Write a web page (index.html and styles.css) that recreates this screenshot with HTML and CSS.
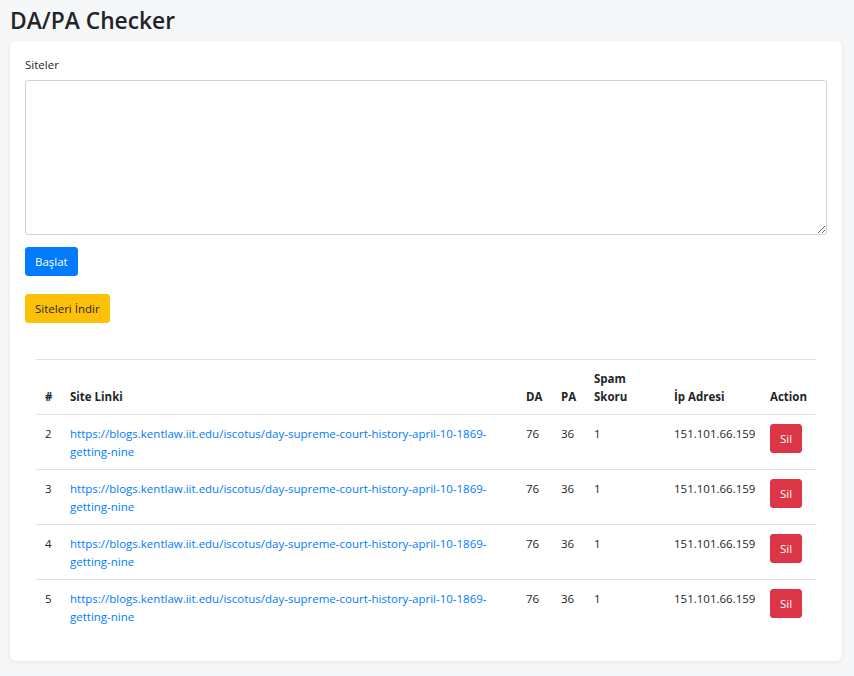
FILE: index.html
```html
<!DOCTYPE html>
<html lang="tr">
<head>
<meta charset="utf-8">
<title>DA/PA Checker</title>
<link rel="stylesheet" href="styles.css">
</head>
<body>
<h1 class="title">DA/PA Checker</h1>
<div class="card">
  <div class="form-group">
    <label class="label" for="sites">Siteler</label>
    <textarea id="sites" class="textarea"></textarea>
  </div>
  <button class="btn btn-primary">Başlat</button>
  <div class="download-row">
    <button class="btn btn-warning">Siteleri İndir</button>
  </div>
  <div class="table-wrap">
    <table class="table">
      <colgroup>
        <col class="c-num"><col class="c-link"><col class="c-da"><col class="c-pa"><col class="c-spam"><col class="c-ip"><col class="c-act">
      </colgroup>
      <thead>
        <tr><th>#</th><th>Site Linki</th><th>DA</th><th>PA</th><th>Spam Skoru</th><th>İp Adresi</th><th>Action</th></tr>
      </thead>
      <tbody>
        <tr><td>2</td><td><a href="#">https://blogs.kentlaw.iit.edu/iscotus/day-supreme-court-history-april-10-1869-getting-nine</a></td><td>76</td><td>36</td><td>1</td><td>151.101.66.159</td><td><button class="btn btn-danger">Sil</button></td></tr>
        <tr><td>3</td><td><a href="#">https://blogs.kentlaw.iit.edu/iscotus/day-supreme-court-history-april-10-1869-getting-nine</a></td><td>76</td><td>36</td><td>1</td><td>151.101.66.159</td><td><button class="btn btn-danger">Sil</button></td></tr>
        <tr><td>4</td><td><a href="#">https://blogs.kentlaw.iit.edu/iscotus/day-supreme-court-history-april-10-1869-getting-nine</a></td><td>76</td><td>36</td><td>1</td><td>151.101.66.159</td><td><button class="btn btn-danger">Sil</button></td></tr>
        <tr><td>5</td><td><a href="#">https://blogs.kentlaw.iit.edu/iscotus/day-supreme-court-history-april-10-1869-getting-nine</a></td><td>76</td><td>36</td><td>1</td><td>151.101.66.159</td><td><button class="btn btn-danger">Sil</button></td></tr>
      </tbody>
    </table>
  </div>
</div>
</body>
</html>
```
FILE: styles.css
```css
html { font-size: 12px; }
body {
  margin: 0;
  padding: 0 12px 15px 10px;
  background: #f6f7f9;
  font-family: "Open Sans", "Noto Sans", sans-serif;
  font-size: 11.5px;
  line-height: 18px;
  color: #212529;
}
.title {
  margin: 7px 0 6px;
  font-size: 22.8px;
  line-height: 28px;
  font-weight: 600;
  color: #212529;
}
.card {
  background: #fff;
  border-radius: 6px;
  box-shadow: 0 1px 4px rgba(0,0,0,0.08);
  padding: 15px 15px 27px;
}
.form-group { margin-bottom: 12px; }
.label {
  display: block;
  margin-bottom: 6px;
  font-size: 11.5px;
}
.textarea {
  display: block;
  box-sizing: border-box;
  width: 100%;
  height: 155px;
  border: 1px solid #ced4da;
  border-radius: 3px;
  padding: 4px 9px;
  margin: 0;
  font: inherit;
}
.btn {
  display: inline-block;
  border: 1px solid transparent;
  border-radius: 3px;
  padding: 5px 9px;
  font-family: inherit;
  font-size: 11.5px;
  line-height: 17px;
  cursor: pointer;
}
.btn-primary { background: #007bff; border-color: #007bff; color: #fff; }
.btn-warning { background: #ffc107; border-color: #ffc107; color: #212529; }
.btn-danger { background: #dc3545; border-color: #dc3545; color: #fff; }
.download-row { margin-top: 18px; }
.table-wrap { margin: 36px 11px 0; }
.table {
  width: 100%;
  border-collapse: collapse;
  table-layout: fixed;
}
.c-num { width: 25px; }
.c-da { width: 35px; }
.c-pa { width: 33px; }
.c-spam { width: 80px; }
.c-ip { width: 96px; }
.c-act { width: 55px; }
.table th, .table td {
  padding: 9px;
  text-align: left;
  border-top: 1px solid #dee2e6;
  vertical-align: top;
}
.table th {
  vertical-align: bottom;
  font-weight: 700;
  border-bottom: 1px solid #dee2e6;
  padding-top: 10px;
  padding-bottom: 8px;
}
.table td { padding-top: 10px; padding-bottom: 8px; }
.table thead th:first-child, .table td:first-child { padding-right: 0; }
.table a { color: #007bff; text-decoration: none; }
.table tbody tr:first-child td { border-top: 0; }
.table td .btn-danger { margin-top: -1px; }
```
